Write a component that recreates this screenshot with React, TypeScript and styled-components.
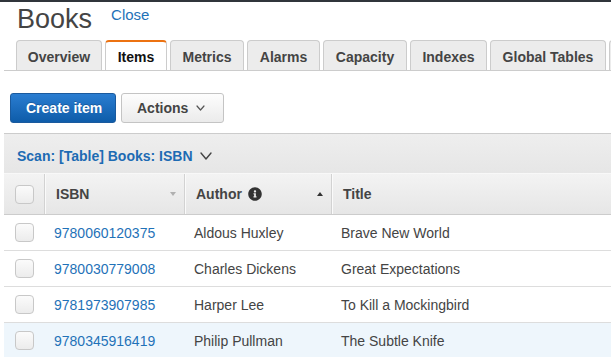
import React from 'react';
import styled, { createGlobalStyle, css } from 'styled-components';
import { FaInfoCircle } from 'react-icons/fa';

const Global = createGlobalStyle`
  html, body { margin: 0; padding: 0; background: #fff; }
  body { font-family: "Liberation Sans", Arial, sans-serif; overflow: hidden; }
`;

const Page = styled.div`
  width: 611px;
  height: 357px;
  overflow: hidden;
  box-sizing: border-box;
  border-top: 2px solid #30353b;
`;

const TitleRow = styled.div`
  display: flex;
  align-items: flex-start;
  gap: 19px;
  padding-left: 17px;
`;

const Title = styled.h1`
  margin: 0;
  font-size: 27px;
  line-height: 34px;
  font-weight: normal;
  color: #444;
`;

const CloseLink = styled.a`
  margin-top: 4px;
  font-size: 15px;
  line-height: 18px;
  color: #1f72b8;
  text-decoration: none;
`;

const TabBar = styled.div`
  display: flex;
  align-items: flex-end;
  gap: 3px;
  margin: 4px 0 0 4px;
  padding-left: 12px;
  border-bottom: 1px solid #ccc;
  overflow: hidden;
`;

const Tab = styled.div<{ $w: number; $active?: boolean }>`
  flex-shrink: 0;
  width: ${(p) => p.$w}px;
  height: 30px;
  box-sizing: border-box;
  padding-top: 8px;
  text-align: center;
  border: 1px solid #ccc;
  border-bottom: none;
  border-radius: 4px 4px 0 0;
  background: #ececec;
  font-size: 14px;
  font-weight: bold;
  line-height: 16px;
  color: #444;
  white-space: nowrap;
  ${(p) =>
    p.$active &&
    css`
      height: 31px;
      margin-bottom: -1px;
      padding-top: 7px;
      border-top: 2px solid #ec7211;
      background: #fff;
      color: #111;
    `}
`;

const Toolbar = styled.div`
  display: flex;
  gap: 5px;
  margin: 22px 0 0 10px;
`;

const Button = styled.button<{ $primary?: boolean; $w: number }>`
  display: inline-flex;
  align-items: center;
  justify-content: flex-start;
  gap: 8px;
  flex-shrink: 0;
  width: ${(p) => p.$w}px;
  height: 30px;
  box-sizing: border-box;
  padding: 0 0 0 15px;
  border-radius: 3px;
  font-family: "Liberation Sans", Arial, sans-serif;
  font-size: 14px;
  font-weight: bold;
  line-height: 16px;
  white-space: nowrap;
  cursor: pointer;
  ${(p) =>
    p.$primary
      ? css`
          background: linear-gradient(#2a7dd1, #0e5ca9);
          border: 1px solid #1a5a9e;
          color: #fff;
          text-shadow: 0 -1px 0 rgba(0, 0, 0, 0.2);
        `
      : css`
          background: linear-gradient(#fdfdfd, #ebebeb);
          border: 1px solid #c4c4c4;
          color: #444;
        `}
`;

const ScanBar = styled.div`
  display: flex;
  align-items: center;
  gap: 7px;
  height: 40px;
  box-sizing: border-box;
  margin: 10px 0 0 4px;
  padding: 5px 0 0 13px;
  border-top: 1px solid #ccc;
  background: linear-gradient(#eeeeee, #e6e6e6);
  font-size: 14px;
  font-weight: bold;
  line-height: 16px;
  color: #1d6bb3;
  white-space: nowrap;
`;

const Grid = styled.div`
  display: grid;
  grid-template-columns: 40px 140px 147px 1fr;
  margin-left: 4px;
  box-sizing: border-box;
`;

const HeaderRow = styled(Grid)`
  height: 42px;
  border-top: 1px solid #f8f8f8;
  border-bottom: 1px solid #ccc;
  background: linear-gradient(#f3f3f3, #e6e6e6);
`;

const HeadCell = styled.div<{ $sep?: boolean }>`
  display: flex;
  align-items: center;
  justify-content: space-between;
  padding: 0 8px 0 11px;
  font-size: 14px;
  font-weight: bold;
  line-height: 16px;
  color: #444;
  ${(p) =>
    p.$sep &&
    css`
      border-left: 1px solid #d2d2d2;
      box-shadow: inset 1px 0 0 #fafafa;
    `}
`;

const CheckCell = styled.div`
  display: flex;
  align-items: center;
  justify-content: center;
`;

const Label = styled.span`
  display: inline-flex;
  align-items: center;
  gap: 6px;
`;

const Caret = styled.span<{ $up?: boolean }>`
  width: 0;
  height: 0;
  border-left: 3.5px solid transparent;
  border-right: 3.5px solid transparent;
  ${(p) =>
    p.$up
      ? css`
          border-bottom: 4px solid #333;
        `
      : css`
          border-top: 4px solid #b0b0b0;
        `}
`;

const Checkbox = styled.span`
  width: 19px;
  height: 19px;
  box-sizing: border-box;
  border: 1px solid #c8c8c8;
  border-radius: 4px;
  background: linear-gradient(#fbfbfb, #ececec);
`;

const Row = styled(Grid)<{ $hl?: boolean }>`
  height: 36px;
  border-bottom: 1px solid #ddd;
  background: ${(p) => (p.$hl ? '#eef6fc' : '#fff')};
`;

const Cell = styled.div<{ $link?: boolean }>`
  display: flex;
  align-items: center;
  padding-left: 10px;
  font-size: 14px;
  line-height: 16px;
  color: ${(p) => (p.$link ? '#1f72b8' : '#444')};
  white-space: nowrap;
`;

const Chevron = ({ w, h, color, stroke }: { w: number; h: number; color: string; stroke: number }) => (
  <svg width={w} height={h} viewBox={`0 0 ${w} ${h}`} fill="none">
    <polyline
      points={`1,1 ${w / 2},${h - 1} ${w - 1},1`}
      stroke={color}
      strokeWidth={stroke}
      strokeLinecap="round"
      strokeLinejoin="round"
    />
  </svg>
);

const tabs = [
  { label: 'Overview', w: 86 },
  { label: 'Items', w: 62, active: true },
  { label: 'Metrics', w: 74 },
  { label: 'Alarms', w: 73 },
  { label: 'Capacity', w: 84 },
  { label: 'Indexes', w: 77 },
  { label: 'Global Tables', w: 116 },
  { label: '', w: 80 },
];

const books = [
  { isbn: '9780060120375', author: 'Aldous Huxley', title: 'Brave New World' },
  { isbn: '9780030779008', author: 'Charles Dickens', title: 'Great Expectations' },
  { isbn: '9781973907985', author: 'Harper Lee', title: 'To Kill a Mockingbird' },
  { isbn: '9780345916419', author: 'Philip Pullman', title: 'The Subtle Knife', hl: true },
];

export default function App() {
  return (
    <>
      <Global />
      <Page>
        <TitleRow>
          <Title>Books</Title>
          <CloseLink href="#">Close</CloseLink>
        </TitleRow>
        <TabBar>
          {tabs.map((t, i) => (
            <Tab key={i} $w={t.w} $active={t.active}>
              {t.label}
            </Tab>
          ))}
        </TabBar>
        <Toolbar>
          <Button $primary $w={106}>Create item</Button>
          <Button $w={103}>
            Actions
            <Chevron w={9} h={6} color="#555" stroke={1.2} />
          </Button>
        </Toolbar>
        <ScanBar>
          Scan: [Table] Books: ISBN
          <Chevron w={12} h={8} color="#444" stroke={1.4} />
        </ScanBar>
        <HeaderRow>
          <CheckCell>
            <Checkbox />
          </CheckCell>
          <HeadCell $sep>
            <Label>ISBN</Label>
            <Caret />
          </HeadCell>
          <HeadCell $sep>
            <Label>
              Author
              <FaInfoCircle size={14} color="#333" />
            </Label>
            <Caret $up />
          </HeadCell>
          <HeadCell $sep>
            <Label>Title</Label>
          </HeadCell>
        </HeaderRow>
        {books.map((b) => (
          <Row key={b.isbn} $hl={b.hl}>
            <CheckCell>
              <Checkbox />
            </CheckCell>
            <Cell $link>{b.isbn}</Cell>
            <Cell>{b.author}</Cell>
            <Cell>{b.title}</Cell>
          </Row>
        ))}
      </Page>
    </>
  );
}
